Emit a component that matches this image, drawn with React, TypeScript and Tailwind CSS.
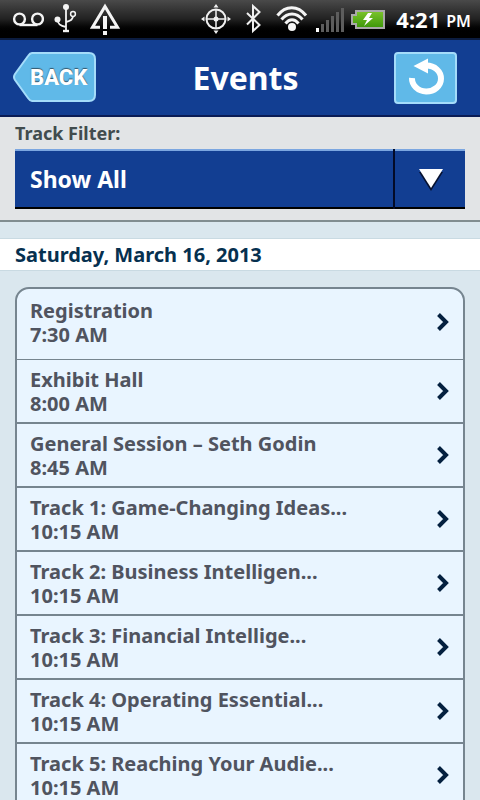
import React from "react";

type Session = { title: string; time: string };

const sessions: Session[] = [
  { title: "Registration", time: "7:30 AM" },
  { title: "Exhibit Hall", time: "8:00 AM" },
  { title: "General Session – Seth Godin", time: "8:45 AM" },
  { title: "Track 1: Game-Changing Ideas...", time: "10:15 AM" },
  { title: "Track 2: Business Intelligen...", time: "10:15 AM" },
  { title: "Track 3: Financial Intellige...", time: "10:15 AM" },
  { title: "Track 4: Operating Essential...", time: "10:15 AM" },
  { title: "Track 5: Reaching Your Audie...", time: "10:15 AM" },
];

function StatusBar() {
  return (
    <div className="flex h-[38px] shrink-0 items-center justify-between bg-linear-to-b from-[#4a4a4a] via-[#222222] to-black to-90% pr-[9px] pl-3 text-white">
      <div className="flex items-center gap-[10px]">
        <svg width="32" height="38" viewBox="0 0 32 38" fill="none" stroke="#f4f4f4" strokeWidth="2.4">
          <circle cx="7.5" cy="19" r="5.4" />
          <circle cx="25.5" cy="19" r="5.4" />
          <path d="M7.5 25H25.5" />
        </svg>
        <svg width="24" height="38" viewBox="0 0 24 38" fill="none" stroke="#f4f4f4" strokeWidth="1.8">
          <path d="M12 6V31M12 27C6 26 3.500 24 3.500 19M12 22C17 21 19 19 19 16" />
          <circle cx="12" cy="7" r="3" fill="#f4f4f4" stroke="none" />
          <circle cx="3.500" cy="19.500" r="3" fill="#f4f4f4" stroke="none" />
          <circle cx="19" cy="14" r="2.400" strokeWidth="1.500" />
          <path d="M9 31H15" strokeWidth="2.400" />
        </svg>
        <svg width="34" height="38" viewBox="0 0 34 38" fill="none" stroke="#f4f4f4" strokeWidth="3">
          <path d="M12 27.300H4.500L17 6.500L29.500 27.300H22" />
          <path d="M17 16V29M17 31V35" strokeWidth="4" />
        </svg>
      </div>
      <div className="flex items-center">
        <svg width="32" height="38" viewBox="200 0 32 38" fill="none" stroke="#f0f0f0" strokeWidth="2">
          <circle cx="216" cy="19" r="9.500" />
          <path d="M206 19H226M216 9V29" strokeWidth="1.500" />
          <circle cx="216" cy="19" r="2.500" fill="#f0f0f0" stroke="none" />
          <path d="M213.500 7.500L216 4L218.500 7.500ZM213.500 30.500L216 34L218.500 30.500ZM204.500 16.500L201 19L204.500 21.500ZM227.500 16.500L231 19L227.500 21.500Z" fill="#f0f0f0" stroke="none" />
        </svg>
        <svg width="42" height="38" viewBox="232 0 42 38" fill="none" stroke="#f0f0f0" strokeWidth="2">
          <path d="M247 13L259.500 25L253 31V6L259.500 12L247 24.500" />
        </svg>
        <svg width="34" height="38" viewBox="274 0 34 38" fill="none" stroke="#f4f4f4" strokeWidth="3">
          <path d="M277.500 15.500C285.500 5 298 5 306 15.500M281.500 19.500C287.500 12 296.500 12 302.500 19.500M285.500 23.500C289.500 18.500 294.500 18.500 298.500 23.500" />
          <circle cx="292" cy="27" r="4" fill="#f4f4f4" stroke="none" />
        </svg>
        <svg width="42" height="38" viewBox="308 0 42 38">
          <path d="M316 28H319V32H316Z" fill="#ffffff" />
          <path d="M321 24H324V32H321ZM326 20H329V32H326ZM331 16H334V32H331ZM336 12H339V32H336ZM341 8H344V32H341Z" fill="#5d5d5d" />
        </svg>
        <svg width="40" height="38" viewBox="350 0 40 38">
          <defs>
            <linearGradient id="charge" x1="0" y1="0" x2="0" y2="1">
              <stop offset="0" stopColor="#7dc52c" />
              <stop offset="1" stopColor="#3c9608" />
            </linearGradient>
          </defs>
          <path d="M356 11H384V28H356V24H352V15H356Z" fill="url(#charge)" stroke="#a9a9a9" strokeWidth="2" />
          <path d="M368 13L363 20H367L364 26L373 18H369L372 13Z" fill="#ffffff" />
        </svg>
        <span className="pl-[6px] text-[22px] leading-[38px] font-bold">4:21</span>
        <span className="pt-1 pl-[6px] text-[16px] leading-[34px] font-semibold">PM</span>
      </div>
    </div>
  );
}

function Header() {
  return (
    <header className="flex h-[79px] shrink-0 items-center justify-between border-t-2 border-b-2 border-t-[#0b1c40] border-b-[#0a1c55] bg-[#123e92] pr-[23px] pl-3">
      <button type="button" className="relative h-[52px] w-[85px]">
        <svg className="absolute inset-0" width="85" height="52" viewBox="0 0 85 52">
          <path d="M20 1H77Q83 1 83 7V43Q83 49 77 49H20Q18 49 16 46L3 28Q1 25 3 22L16 4Q18 1 20 1Z" fill="#60b9e8" stroke="#a4dcfa" strokeWidth="2" />
        </svg>
        <span className="relative block pl-[18px] text-left font-['Roboto','Liberation_Sans',sans-serif] text-[22px] leading-[50px] font-extrabold text-white [text-shadow:0_-1px_1px_#33566b]">
          BACK
        </span>
      </button>
      <h1 className="text-[32px] leading-[40px] font-bold text-white">Events</h1>
      <button type="button" aria-label="Refresh" className="flex h-[52px] w-[63px] items-center justify-center rounded-[4px] border-2 border-[#a4dcfa] bg-[#60b9e8]">
        <svg width="40" height="40" viewBox="0 0 40 40">
          <path d="M6 20A14.500 13 0 1 0 20.500 7.500" fill="none" stroke="#ffffff" strokeWidth="6" />
          <path d="M7.500 8L22 0.500V15.500Z" fill="#ffffff" />
        </svg>
      </button>
    </header>
  );
}

function TrackFilter() {
  return (
    <section className="shrink-0 border-b-2 border-[#818d90] bg-[#e2e4e6] px-[15px] pb-[11px]">
      <label htmlFor="track" className="block text-[18px] leading-8 font-bold text-[#414c4e]">
        Track Filter:
      </label>
      <div className="relative">
        <select
          id="track"
          className="block h-[60px] w-full appearance-none rounded-none border-t-2 border-b-2 border-t-[#7ba6e0] border-b-black bg-[#123e92] pr-[80px] pl-[15px] text-[23px] font-bold text-white"
        >
          <option>Show All</option>
        </select>
        <div className="pointer-events-none absolute inset-y-0 right-0 flex w-[72px] items-center justify-center border-l-2 border-[#030b28]">
          <svg width="28" height="26" viewBox="-1 -2 28 26">
            <path d="M2 4H26L14 23Z" fill="#06112f" />
            <path d="M2 1H26L14 20Z" fill="#ffffff" />
          </svg>
        </div>
      </div>
    </section>
  );
}

function SessionList() {
  return (
    <ul className="mx-[15px] mt-4 mb-4 overflow-hidden rounded-[14px] border-2 border-[#76858f] bg-[#e9f5ff] pb-4">
      {sessions.map((s, i) => (
        <li
          key={s.title}
          className={i === 0 ? "border-b border-[#76858f] pt-[2px] pb-[6px]" : "border-b-2 border-[#76858f] last:border-b-0"}
        >
          <a href="#session" className="flex items-center justify-between pt-2 pr-[13px] pb-[6px] pl-[13px] text-[20px] leading-6 font-bold text-[#50545f]">
            <span>
              {s.title}
              <br />
              {s.time}
            </span>
            <svg width="14" height="20" viewBox="0 1 14 20" fill="none" stroke="#04203f" strokeWidth="4">
              <path d="M2.500 2.500L10 10L2.500 17.500" />
            </svg>
          </a>
        </li>
      ))}
    </ul>
  );
}

export default function App() {
  return (
    <div className="flex h-screen flex-col overflow-hidden bg-[#dae7ee] font-['Noto_Sans','Open_Sans',sans-serif]">
      <StatusBar />
      <Header />
      <TrackFilter />
      <main className="min-h-0 flex-1 overflow-hidden pt-4">
        <h2 className="border-y border-[#c9dae2] bg-white px-[15px] text-[20px] leading-[31px] font-bold text-[#06304f]">
          Saturday, March 16, 2013
        </h2>
        <SessionList />
      </main>
    </div>
  );
}
